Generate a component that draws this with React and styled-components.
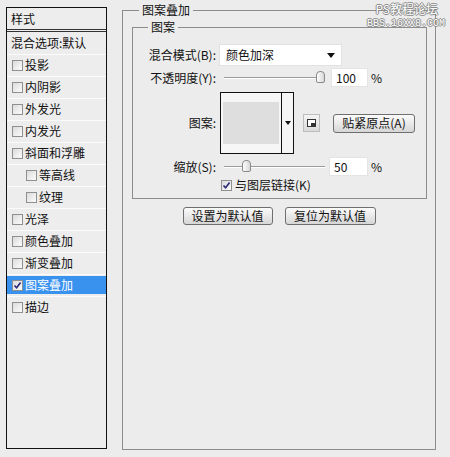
import React from "react";
import styled, { createGlobalStyle } from "styled-components";

const GlobalStyle = createGlobalStyle`
  html, body { margin: 0; padding: 0; background: #ececec; }
  body {
    font-family: "Noto Sans CJK SC", "Liberation Sans", sans-serif;
    font-size: 12px;
    color: #111;
  }
  * { box-sizing: border-box; }
`;

const Page = styled.div`
  position: relative;
  width: 450px;
  height: 457px;
  display: flex;
  align-items: flex-start;
  padding-left: 6px;
  gap: 15px;
  overflow: hidden;
`;

/* ---------- left styles list ---------- */
const StylesList = styled.div`
  margin-top: 7px;
  width: 101px;
  height: 442px;
  border: 1px solid #111;
  background: #ededed;
  display: flex;
  flex-direction: column;
`;

const ListHeader = styled.div`
  height: 24px;
  padding: 0 0 0 4px;
  display: flex;
  align-items: center;
  border-bottom: 3px double #333;
  line-height: 1;
`;

const DefaultRow = styled.div`
  height: 22px;
  padding-left: 4px;
  display: flex;
  align-items: center;
  line-height: 1;
`;

const ListItem = styled.div`
  height: 22px;
  border-top: 1px solid #fbfbfb;
  padding: 1px 0 2px;
`;

const ItemBody = styled.div`
  height: 18px;
  display: flex;
  align-items: center;
  gap: 2px;
  padding-left: ${(p) => (p.$indent ? 19 : 5)}px;
  background: ${(p) => (p.$active ? "#3a92ef" : "transparent")};
  color: ${(p) => (p.$active ? "#fff" : "#111")};
  line-height: 1;
`;

const Box = styled.span`
  width: 11px;
  height: 11px;
  flex: none;
  border: 1px solid #8e8f8f;
  background: linear-gradient(135deg, #dcdcdc, #fbfbfb);
  display: flex;
  align-items: center;
  justify-content: center;
`;

const Check = ({ checked }) => (
  <Box>
    {checked && (
      <svg width="9" height="9" viewBox="0 0 9 9">
        <path d="M1.5 4.5 L3.6 6.8 L7.6 1.6" fill="none" stroke="#2b2b7a" strokeWidth="1.7" />
      </svg>
    )}
  </Box>
);

/* ---------- right group boxes ---------- */
const Group = styled.fieldset`
  margin: 3px 0 0 ${(p) => p.$ml || 0}px;
  padding: 0;
  width: ${(p) => p.$w}px;
  height: ${(p) => p.$h}px;
  border: 1px solid #8c8c8c;
  min-width: 0;
`;

const Legend = styled.legend`
  margin-left: ${(p) => p.$ml}px;
  padding: 0 3px;
  line-height: 14px;
  font-size: 12px;
`;

const Row = styled.div`
  display: flex;
  align-items: center;
  height: ${(p) => p.$h}px;
  margin-top: ${(p) => p.$mt}px;
`;

const Label = styled.div`
  width: 84px;
  padding-right: 1px;
  text-align: right;
  white-space: nowrap;
  line-height: 1;
`;

const Select = styled.div`
  margin-left: 2px;
  width: 123px;
  height: 22px;
  background: #fff;
  border: 1px solid #e2e2e2;
  display: flex;
  align-items: center;
  justify-content: space-between;
  padding: 0 6px 0 6px;
  line-height: 1;
`;

const Arrow = styled.span`
  width: 0;
  height: 0;
  border-left: 4px solid transparent;
  border-right: 4px solid transparent;
  border-top: 5px solid #111;
`;

const SliderTrack = styled.div`
  position: relative;
  margin-left: 5px;
  width: 105px;
  height: 19px;
  &::before {
    content: "";
    position: absolute;
    left: 2px;
    right: 2px;
    top: 9px;
    height: 1px;
    background: #9a9a9a;
    box-shadow: 0 1px 0 #fff;
  }
`;

const Thumb = styled.span`
  position: absolute;
  top: 3px;
  left: ${(p) => p.$pos}px;
  width: 9px;
  height: 12px;
  border: 1px solid #8a8a8a;
  border-radius: 4px 4px 2px 2px;
  background: linear-gradient(90deg, #fdfdfd, #d8d8d8);
`;

const NumberBox = styled.div`
  margin-left: ${(p) => p.$ml}px;
  width: ${(p) => p.$w}px;
  height: 19px;
  background: #fff;
  border: 1px solid #e4e4e4;
  display: flex;
  align-items: center;
  padding-left: 4px;
  line-height: 1;
`;

const Unit = styled.span`
  margin-left: 3px;
  line-height: 1;
`;

const Swatch = styled.div`
  margin-left: 3px;
  width: 74px;
  height: 62px;
  border: 1px solid #111;
  background: #f6f6f6;
  display: flex;
`;

const SwatchPreview = styled.div`
  flex: 1;
  padding: 9px 2px 9px 2px;
  display: flex;
  & > div {
    flex: 1;
    background: #dedede;
  }
`;

const SwatchArrow = styled.div`
  width: 12px;
  border-left: 1px solid #111;
  display: flex;
  align-items: center;
  justify-content: center;
  & > span {
    border-left: 3px solid transparent;
    border-right: 3px solid transparent;
    border-top: 4px solid #111;
  }
`;

const IconButton = styled.div`
  margin-left: 9px;
  width: 17px;
  height: 18px;
  border: 1px solid #bdbdbd;
  background: linear-gradient(#f4f4f4, #dadada);
  display: flex;
  align-items: center;
  justify-content: center;
`;

const Button = styled.div`
  margin-left: ${(p) => p.$ml || 0}px;
  width: ${(p) => p.$w}px;
  height: ${(p) => p.$h || 18}px;
  border: 1px solid #6f6f6f;
  border-radius: 3px;
  background: linear-gradient(#fbfbfb, #e9e9e9 50%, #d6d6d6);
  display: flex;
  align-items: center;
  justify-content: center;
  line-height: 1;
  white-space: nowrap;
`;

const CheckRow = styled.div`
  display: flex;
  align-items: center;
  gap: 3px;
  margin: 3px 0 0 88px;
  height: 12px;
  line-height: 1;
`;

const ButtonRow = styled.div`
  margin-top: 8px;
  display: flex;
  justify-content: center;
  gap: 12px;
`;

const Watermark = styled.div`
  position: absolute;
  right: 5px;
  top: 3px;
  display: flex;
  flex-direction: column;
  align-items: flex-end;
  color: #fff;
  line-height: 1;
  text-shadow: 1px 0 0 #8a8a8a, -1px 0 0 #8a8a8a, 0 1px 0 #8a8a8a, 0 -1px 0 #8a8a8a;
`;

const WmTitle = styled.span`
  font-size: 12px;
  margin-right: 7px;
  height: 15px;
`;

const WmSite = styled.span`
  font-family: "Liberation Mono", monospace;
  font-size: 10px;
  margin-top: 1px;
`;

const items = [
  { t: "投影" },
  { t: "内阴影" },
  { t: "外发光" },
  { t: "内发光" },
  { t: "斜面和浮雕" },
  { t: "等高线", indent: true },
  { t: "纹理", indent: true },
  { t: "光泽" },
  { t: "颜色叠加" },
  { t: "渐变叠加" },
  { t: "图案叠加", active: true, checked: true },
  { t: "描边" },
];

export default function App() {
  return (
    <>
      <GlobalStyle />
      <Page>
        <StylesList>
          <ListHeader>样式</ListHeader>
          <DefaultRow>混合选项:默认</DefaultRow>
          {items.map((it) => (
            <ListItem key={it.t}>
              <ItemBody $indent={it.indent} $active={it.active}>
                <Check checked={it.checked} />
                <span>{it.t}</span>
              </ItemBody>
            </ListItem>
          ))}
        </StylesList>

        <Group $w={314} $h={447}>
          <Legend $ml={16}>图案叠加</Legend>
          <Group $w={295} $h={179} $ml={9}>
            <Legend $ml={15}>图案</Legend>
            <Row $h={22} $mt={10}>
              <Label>混合模式(B):</Label>
              <Select>
                <span>颜色加深</span>
                <Arrow />
              </Select>
            </Row>
            <Row $h={19} $mt={2}>
              <Label>不透明度(Y):</Label>
              <SliderTrack>
                <Thumb $pos={94} />
              </SliderTrack>
              <NumberBox $ml={4} $w={37}>100</NumberBox>
              <Unit>%</Unit>
            </Row>
            <Row $h={62} $mt={5}>
              <Label>图案:</Label>
              <Swatch>
                <SwatchPreview>
                  <div />
                </SwatchPreview>
                <SwatchArrow>
                  <span />
                </SwatchArrow>
              </Swatch>
              <IconButton>
                <svg width="9" height="8" viewBox="0 0 9 8">
                  <rect x="0.5" y="0.5" width="8" height="7" fill="#fff" stroke="#333" />
                  <rect x="4" y="4" width="4" height="3" fill="#333" />
                </svg>
              </IconButton>
              <Button $ml={13} $w={82} $h={19}>贴紧原点(A)</Button>
            </Row>
            <Row $h={19} $mt={3}>
              <Label>缩放(S):</Label>
              <SliderTrack>
                <Thumb $pos={20} />
              </SliderTrack>
              <NumberBox $ml={2} $w={39}>50</NumberBox>
              <Unit>%</Unit>
            </Row>
            <CheckRow>
              <Check checked />
              <span>与图层链接(K)</span>
            </CheckRow>
          </Group>
          <ButtonRow>
            <Button $w={90}>设置为默认值</Button>
            <Button $w={91}>复位为默认值</Button>
          </ButtonRow>
        </Group>

        <Watermark>
          <WmTitle>PS教程论坛</WmTitle>
          <WmSite>BBS.16XX8.COM</WmSite>
        </Watermark>
      </Page>
    </>
  );
}
